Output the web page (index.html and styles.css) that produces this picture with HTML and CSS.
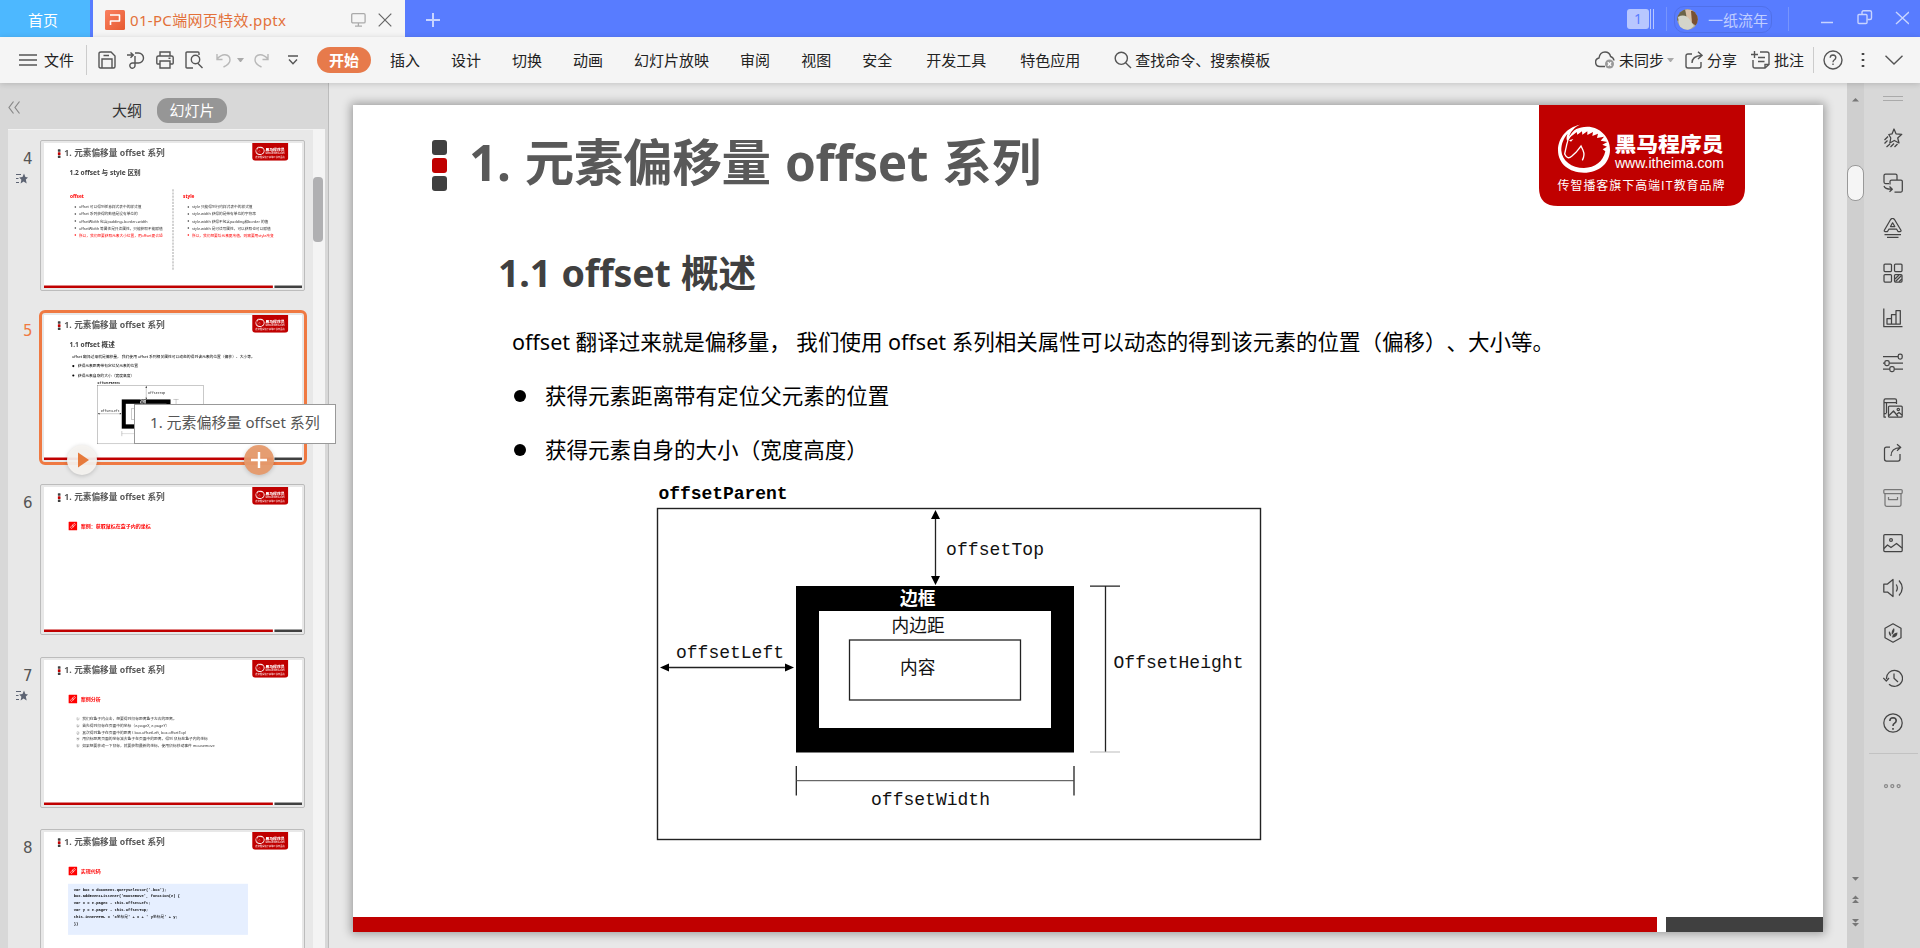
FILE: index.html
```html
<!DOCTYPE html>
<html lang="zh-CN">
<head>
<meta charset="utf-8">
<title>01-PC端网页特效.pptx</title>
<link rel="stylesheet" href="styles.css">
</head>
<body>
<svg class="defs" width="0" height="0" aria-hidden="true">
  <symbol id="logo" viewBox="0 0 206 101">
    <path d="M0 0H206V83Q206 101 187 101H19Q0 101 0 83Z" fill="#c00000"/>
    <g transform="translate(-39 -15) scale(.33333)">
      <path d="M240 104C200 112 174 145 174 180C174 221 207 248 252 248C297 248 330 219 330 179C330 140 298 110 262 110C248 110 238 113 229 117C220 122 211 133 206 143C211 126 222 112 240 104Z" fill="#fff"/>
      <path d="M220 134L230 126L232 134L246 124L247 134L262 124L262 135L279 126L277 138L294 131L291 144L312 140L302 152L322 156L307 164L321 170L308 178L316 184C310 214 285 234 252 234C214 234 186 211 184 182C183 161 192 143 203 131C198 142 200 150 202 153C207 144 213 138 220 134Z" fill="#c00000"/>
      <path d="M212 136C200 150 202 160 197 178L194 192C200 205 207 206 215 199L228 187L243 168L249 181C254 192 252 202 247 211" fill="none" stroke="#fff" stroke-width="4"/>
      <path d="M207 151L220 147L213 155Z" fill="#fff"/>
    </g>
    <text x="75.5" y="46.5" class="logo-name" textLength="109" lengthAdjust="spacingAndGlyphs">黑马程序员</text>
    <text x="76" y="62.5" class="logo-url" textLength="109" lengthAdjust="spacingAndGlyphs">www.itheima.com</text>
    <text x="18.5" y="84.7" class="logo-tag" textLength="167">传智播客旗下高端IT教育品牌</text>
  </symbol>
  <symbol id="diagram" viewBox="650 483 620 360">
    <rect x="657.5" y="508.5" width="603" height="331" fill="none" stroke="#222" stroke-width="1.4"/>
    <text x="658.5" y="498.5" class="dg dg-b" textLength="129">offsetParent</text>
    <path d="M935.5 514V580M664 667.5H790" stroke="#222" stroke-width="1.3"/>
    <path d="M935.5 510L940 519H931ZM935.5 585L940 576H931ZM660 667.5L669 663.5V671.5ZM794 667.5L785 663.5V671.5Z"/>
    <text x="946" y="555" class="dg" textLength="98">offsetTop</text>
    <text x="676" y="657.5" class="dg" textLength="108">offsetLeft</text>
    <rect x="796" y="586" width="278" height="166.5"/>
    <rect x="819" y="611" width="232" height="117" fill="#fff"/>
    <rect x="849.5" y="640" width="171" height="60" fill="none" stroke="#222" stroke-width="1.3"/>
    <text x="900" y="604.5" class="dg-cn dg-inv">边框</text>
    <text x="891.5" y="631.5" class="dg-cn">内边距</text>
    <text x="900" y="673.5" class="dg-cn">内容</text>
    <path d="M1090 586.2H1120M1105.5 586V752M796.3 766V795.5M1074 766V795.5" stroke="#222" stroke-width="1.3"/>
    <path d="M1090 752H1120" stroke="#bbb"/>
    <path d="M796 780.7H1074" stroke="#444"/>
    <text x="1113.5" y="668" class="dg" textLength="130">OffsetHeight</text>
    <text x="871" y="805" class="dg" textLength="119">offsetWidth</text>
  </symbol>
  <symbol id="flag" viewBox="0 0 12 11"><path d="M8 .5L9.4 4L12 4.4L9.8 6.6L10.7 10.5L7.6 8.4L4.6 10.5L5.4 6.7L3.2 4.4L6.5 4ZM0 1H5V2H0ZM0 5H2.5V6H0ZM0 9H3V10H0Z" fill="#5d6473"/></symbol>
  <symbol id="link" viewBox="0 0 51 51"><rect width="51" height="51" rx="5" fill="#f00"/><g fill="none" stroke="#fff" stroke-width="3"><rect x="21" y="15" width="20" height="10" rx="5" transform="rotate(-50 31 20)"/><rect x="11" y="25" width="20" height="10" rx="5" transform="rotate(-50 21 30)"/></g></symbol>
</svg>

<header class="titlebar">
  <div class="home">首页</div>
  <div class="doc">
    <svg class="p-icon" width="20" height="20" viewBox="0 0 20 20"><defs><linearGradient id="pg" x1="0" y1="0" x2="1" y2="1"><stop offset="0" stop-color="#fa8060"/><stop offset="1" stop-color="#e65a30"/></linearGradient></defs><rect width="20" height="20" rx="1.5" fill="url(#pg)"/><path d="M5 5H14.5V11H5.5V15" fill="none" stroke="#fff" stroke-width="1.6" stroke-linejoin="round"/></svg>
    <span class="doc-name">01-PC端网页特效.pptx</span>
    <svg class="i-mon" width="15" height="14" viewBox="0 0 15 14" fill="none" stroke="#aaa" stroke-width="1.3"><rect x=".7" y=".7" width="13.4" height="9.2" rx="1.2"/><path d="M7.4 10V13M4 13.2H11"/></svg>
    <svg class="i-x" width="14" height="14" viewBox="0 0 14 14" stroke="#666" stroke-width="1.2"><path d="M.7 .7L13.3 13.3M13.3 .7L.7 13.3"/></svg>
  </div>
  <svg class="i-plus" width="16" height="16" viewBox="0 0 16 16" stroke="#c8d4ff" stroke-width="2"><path d="M8 1V15M1 8H15"/></svg>
  <div class="title-right">
    <span class="badge">1</span><span class="stripes"></span>
    <span class="tsep"></span>
    <div class="user">
      <svg width="21" height="21" viewBox="0 0 21 21"><clipPath id="av"><circle cx="10.5" cy="10.5" r="10.3"/></clipPath><g clip-path="url(#av)"><rect width="21" height="21" fill="#aaa99b"/><path d="M0 0H13L9 9L0 12Z" fill="#6c6448"/><path d="M8 0H17L15 13L10 10Z" fill="#d8c0a8"/><path d="M14 2L21 0V18L15 14Z" fill="#785034"/><path d="M1 8Q8 4 13 11L17 17L12 21H3Z" fill="#d4d5ca"/></g></svg>
      <span>一纸流年</span>
    </div>
    <span class="tsep tsep2"></span>
    <svg class="i-win" width="88" height="16" viewBox="0 0 88 16" fill="none" stroke="#c8d4ff" stroke-width="1.4"><path d="M0 12.5H12M75 2L88 14M88 2L75 14"/><rect x="37" y="4.5" width="9" height="9" rx="1"/><path d="M41 4V2.2Q41 .8 42.5 .8H49Q50.5 .8 50.5 2.2V8Q50.5 9.5 49 9.5H46.5"/></svg>
  </div>
</header>

<nav class="toolbar">
  <svg class="i-burger" width="18" height="12" viewBox="0 0 18 12" stroke="#555" stroke-width="1.4"><path d="M0 1H18M0 6H18M0 11H18"/></svg>
  <span class="file">文件</span><span class="sep"></span>
  <div class="quick">
    <svg width="18" height="18" viewBox="0 0 18 18"><path d="M3 1H13L17 5V15.5Q17 17 15.5 17H2.5Q1 17 1 15.5V2.5Q1 1 3 1ZM4 17V8H14V17M5.5 4.5H11"/></svg>
    <svg width="18" height="18" viewBox="0 0 18 18"><path d="M0 4H6M3.5 1.5L6.3 4L3.5 6.7M8 2H11.5A5 5 0 0 1 11.5 12H5.5A2.6 2.6 0 1 0 8 14.5V5"/></svg>
    <svg width="18" height="18" viewBox="0 0 18 18"><path d="M4 5V1H14V5M4 13H1.5Q.8 13 .8 12V6.5Q.8 5 2.5 5H15.5Q17.2 5 17.2 6.5V12Q17.2 13 16.5 13H14M4 10H14V17H4ZM12.5 7.3H14.5"/></svg>
    <svg width="18" height="18" viewBox="0 0 18 18"><path d="M8 17H2Q1 17 1 16V2Q1 1 2 1H13Q14 1 14 2V4"/><circle cx="10.5" cy="8.5" r="4.2"/><path d="M12.5 12L17.5 17"/></svg>
    <svg class="dim undo" width="16" height="18" viewBox="0 0 16 18"><path d="M1 3V8.5H6.5M1 8Q5 3.5 9 3.7Q14 4.2 14 9Q14 13 7.5 16"/></svg>
    <i class="caret"></i>
    <svg class="dim" width="16" height="18" viewBox="0 0 16 18"><path d="M15 3V8.5H9.5M15 8Q11 3.5 7 3.7Q2 4.2 2 9Q2 13 8.5 16"/></svg>
    <svg class="more" width="10" height="10" viewBox="0 0 10 10"><path d="M0 1H10M1 4.5L5 8.7L9 4.5"/></svg>
  </div>
  <div class="tabs">
    <span class="active">开始</span><span>插入</span><span>设计</span><span>切换</span><span>动画</span><span>幻灯片放映</span><span>审阅</span><span>视图</span><span>安全</span><span class="wide">开发工具</span><span class="wide">特色应用</span>
  </div>
  <div class="search"><svg width="18" height="18" viewBox="0 0 18 18"><circle cx="7.3" cy="7.3" r="6.1"/><path d="M11.6 11.8L17 17"/></svg>查找命令、搜索模板</div>
  <div class="tools">
    <svg width="20" height="18" viewBox="0 0 20 18"><path d="M10 15.5H5A4.3 4.3 0 0 1 4 7Q5 1 10 1Q14.5 1 15.6 5.5Q18.5 6.5 19 9.5"/><circle cx="14.5" cy="13" r="4.5" fill="#999" stroke="none"/><path d="M12.8 11.3L16.2 14.7M16.2 11.3L12.8 14.7" stroke="#fff"/></svg>
    <span class="t1">未同步</span><i class="caret c2"></i>
    <svg class="g1" width="18" height="18" viewBox="0 0 18 18"><path d="M7 3H3Q1 3 1 5V15Q1 17 3 17H14Q16 17 16 15V11M7 12Q7 5 16.5 4.5M13 .8L17 4.4L13 8"/></svg>
    <span class="t1">分享</span>
    <svg class="g2" width="19" height="18" viewBox="0 0 19 18"><path d="M0 3.5H7M3.5 0V7M9 1H16Q18 1 18 3V13.5L14 17H4Q2 17 2 15V9M14 17V13.5H18M7 10.5H13.5M7 6.5H14"/></svg>
    <span class="t1">批注</span><span class="sep s2"></span>
    <svg class="g3" width="20" height="20" viewBox="0 0 20 20"><circle cx="10" cy="10" r="9"/><path d="M7.2 7.8Q7.4 5 10 5Q12.8 5.2 12.8 7.6Q12.8 9 11.2 10Q10 10.8 10 12.2M10 13.6V15"/></svg>
    <svg class="g4" width="4" height="16" viewBox="0 0 4 16"><path d="M.7 2H3.3M.7 8H3.3M.7 14H3.3" stroke-width="2.2"/></svg>
    <svg class="g5" width="18" height="10" viewBox="0 0 18 10"><path d="M.5 .7L9 9L17.5 .7"/></svg>
  </div>
</nav>

<main class="work">
  <aside class="panel">
    <div class="panel-head">
      <svg width="13" height="13" viewBox="0 0 13 13" fill="none" stroke="#888" stroke-width="1.2"><path d="M5.5 .5L1 6.5L5.5 12.5M11.5 .5L7 6.5L11.5 12.5"/></svg>
      <span class="outline">大纲</span><span class="pill">幻灯片</span>
    </div>
    <div class="panel-body">
      <div class="list">
        <div class="item">
          <div class="gutter">4<svg width="12" height="11"><use href="#flag"/></svg></div>
          <div class="frame"><div class="mini"><section class="slide">
            <div class="head"><div class="dots"><i></i><i></i><i></i></div><h1>1. 元素偏移量 offset 系列</h1><svg class="logo"><use href="#logo"/></svg></div>
            <h2>1.2 offset 与 style 区别</h2>
            <div class="cols">
              <div class="col"><h3>offset</h3><ul><li>offset 可以得到任意样式表中的样式值</li><li>offset 系列获得的数值是没有单位的</li><li>offsetWidth 包含padding+border+width</li><li>offsetWidth 等属性是只读属性，只能获取不能赋值</li><li class="red">所以，我们想要获取元素大小位置，用offset更合适</li></ul></div>
              <div class="col col2"><h3>style</h3><ul><li>style 只能得到行内样式表中的样式值</li><li>style.width 获得的是带有单位的字符串</li><li>style.width 获得不包含padding和border 的值</li><li>style.width 是可读写属性，可以获取也可以赋值</li><li class="red">所以，我们想要给元素更改值，则需要用style改变</li></ul></div>
            </div>
            <div class="foot"><i></i><i></i></div>
          </section></div></div>
        </div>
        <div class="item sel">
          <div class="gutter">5</div>
          <div class="frame"><div class="mini"><section class="slide">
            <div class="head"><div class="dots"><i></i><i></i><i></i></div><h1>1. 元素偏移量 offset 系列</h1><svg class="logo"><use href="#logo"/></svg></div>
            <h2>1.1 offset 概述</h2>
            <p class="para">offset 翻译过来就是偏移量， 我们使用 offset 系列相关属性可以动态的得到该元素的位置（偏移）、大小等。</p>
            <p class="pt">获得元素距离带有定位父元素的位置</p><p class="pt">获得元素自身的大小（宽度高度）</p>
            <svg class="diagram"><use href="#diagram"/></svg>
            <div class="foot"><i></i><i></i></div>
          </section></div>
          <svg class="play" width="36" height="36" viewBox="0 0 36 36"><circle cx="18" cy="18" r="15" fill="#f5f3f0" fill-opacity=".93"/><path d="M14 10.5L25 18L14 25.5Z" fill="#e67a3c"/></svg>
          <svg class="add" width="36" height="36" viewBox="0 0 36 36"><circle cx="18" cy="18" r="15" fill="#e69a6c" fill-opacity=".95"/><path d="M18 10V26M10 18H26" stroke="#fff" stroke-width="2.4"/></svg>
          <div class="tip">1. 元素偏移量 offset 系列</div>
          </div>
        </div>
        <div class="item">
          <div class="gutter">6</div>
          <div class="frame"><div class="mini"><section class="slide">
            <div class="head"><div class="dots"><i></i><i></i><i></i></div><h1>1. 元素偏移量 offset 系列</h1><svg class="logo"><use href="#logo"/></svg></div>
            <div class="case"><svg><use href="#link"/></svg>案例：获取鼠标在盒子内的坐标</div>
            <div class="foot"><i></i><i></i></div>
          </section></div></div>
        </div>
        <div class="item">
          <div class="gutter">7<svg width="12" height="11"><use href="#flag"/></svg></div>
          <div class="frame"><div class="mini"><section class="slide">
            <div class="head"><div class="dots"><i></i><i></i><i></i></div><h1>1. 元素偏移量 offset 系列</h1><svg class="logo"><use href="#logo"/></svg></div>
            <div class="case"><svg><use href="#link"/></svg>案例分析</div>
            <div class="steps"><p><b>①</b>我们在盒子内点击，想要得到鼠标距离盒子左右的距离。</p><p><b>②</b>首先得到鼠标在页面中的坐标（e.pageX, e.pageY）</p><p><b>③</b>其次得到盒子在页面中的距离 ( box.offsetLeft, box.offsetTop)</p><p><b>④</b>用鼠标距离页面的坐标减去盒子在页面中的距离，得到 鼠标在盒子内的坐标</p><p><b>⑤</b>如果想要移动一下鼠标，就要获取最新的坐标，使用鼠标移动事件 mousemove</p></div>
            <div class="foot"><i></i><i></i></div>
          </section></div></div>
        </div>
        <div class="item">
          <div class="gutter">8</div>
          <div class="frame"><div class="mini"><section class="slide">
            <div class="head"><div class="dots"><i></i><i></i><i></i></div><h1>1. 元素偏移量 offset 系列</h1><svg class="logo"><use href="#logo"/></svg></div>
            <div class="case"><svg><use href="#link"/></svg>实现代码</div>
            <pre class="code">var box = document.querySelector('.box');
box.addEventListener('mousemove', function(e) {
var x = e.pageX - this.offsetLeft;
var y = e.pageY - this.offsetTop;
this.innerHTML = 'x<em>坐标是</em>' + x + ' y<em>坐标是</em>' + y;
})</pre>
            <div class="foot"><i></i><i></i></div>
          </section></div></div>
        </div>
      </div>
      <div class="track"><div class="grip"></div></div>
    </div>
  </aside>

  <div class="canvas">
    <section class="slide main-slide">
      <div class="head"><div class="dots"><i></i><i></i><i></i></div><h1>1. 元素偏移量 offset 系列</h1><svg class="logo"><use href="#logo"/></svg></div>
      <h2>1.1 offset 概述</h2>
      <p class="para">offset 翻译过来就是偏移量， 我们使用 offset 系列相关属性可以动态的得到该元素的位置（偏移）、大小等。</p>
      <p class="pt">获得元素距离带有定位父元素的位置</p><p class="pt">获得元素自身的大小（宽度高度）</p>
      <svg class="diagram"><use href="#diagram"/></svg>
      <div class="foot"><i></i><i></i></div>
    </section>
  </div>

  <div class="vscroll">
    <svg class="up" width="9" height="5" viewBox="0 0 9 5"><path d="M1 4.5L4.5 1L8 4.5Z"/></svg>
    <div class="knob"></div>
    <svg class="downs" width="9" height="55" viewBox="0 0 9 55"><path d="M1 1H8L4.5 4.8ZM1 23L4.5 19.5L8 23ZM1 27L4.5 23.5L8 27ZM1 43H8L4.5 46.5ZM1 47H8L4.5 50.5Z"/></svg>
  </div>

  <aside class="side">
    <span class="handle"></span>
    <svg viewBox="0 0 20 20"><path d="M11 1L13 5.8L18.8 6.3L14.7 10L16 15L11.3 12.5L6.8 15L7.8 10L5.8 6.5L9 5.9ZM5 8.5L1.5 12M4.5 12.5L1.5 15.5M7 16L3.5 19M11 15.5L7.5 19M14.5 16L11.5 19"/></svg>
    <svg viewBox="0 0 20 20"><path d="M6 10.5H2.5Q1 10.5 1 9V2.5Q1 1 2.5 1H12.5Q14 1 14 2.5V7M1 13Q2 16.5 9 16.2M6.5 13.5L9.3 16.2L6.5 18.8" /><path d="M7 11.5V8.5Q7 7 8.5 7H18Q19.3 7 19.3 8.3V17.5Q19.3 19 18 19H11.5"/></svg>
    <svg viewBox="0 0 20 20"><path d="M2 13.5Q.8 13.5 1.5 12L7.6 1.5Q9.5-.8 11.5 1.5L17.8 12Q18.5 13.5 17.2 13.5H15L13.5 11H6L4.5 13.5ZM7.5 8.5H11.8L9.6 4.8ZM1.5 16.5H18M4 19.3H15.5"/></svg>
    <svg viewBox="0 0 20 20"><rect x="1" y="1" width="7.5" height="7.5" rx="1"/><rect x="11.5" y="1" width="7.5" height="7.5" rx="1"/><rect x="1" y="11.5" width="7.5" height="7.5" rx="1"/><rect x="11.5" y="11.5" width="7.5" height="7.5" rx="1"/><path d="M12 16L16 12M12.5 18.5L18.5 12.5M16 18.8L18.8 16"/></svg>
    <svg viewBox="0 0 20 20"><path d="M.8 .5V18.7H19.5M4 16V10.5H8.5V16ZM8.5 16V6.5H13V16ZM13 16V2.5H17.3V16Z"/></svg>
    <svg viewBox="0 0 20 20"><path d="M0 3.5H15M0 10H1.5M6.5 10H20M0 16H6.5M11.5 16H20"/><rect x="15.2" y="1" width="4" height="5" rx="1.8"/><rect x="1.8" y="7.5" width="4.4" height="5" rx="1.8"/><rect x="6.8" y="13.5" width="4.4" height="5" rx="1.8"/></svg>
    <svg viewBox="0 0 20 20"><path d="M3 19H1V2.5Q1 .8 2.5 .8H12Q13.5 .8 13.5 2.5V6M1 4.5H13.5M3.5 4.5V15M1 15.5H3.5"/><rect x="5.5" y="8" width="13.7" height="11.2" rx="1"/><path d="M6 17.5L10.5 13L15 18.5M14 16L16 14.5L19 17"/><circle cx="15.3" cy="11.5" r="1.2"/></svg>
    <svg viewBox="0 0 20 20"><path d="M7 4H3.5Q1.5 4 1.5 6V16Q1.5 18 3.5 18H15Q17 18 17 16V11M8 13Q8 5 17.5 4.5M14 1.2L17.8 4.4L14 7.8"/></svg>
    <svg viewBox="0 0 20 20" class="soft"><rect x=".8" y="1.5" width="18.4" height="4" rx="1"/><path d="M2 5.5V16.5Q2 18.3 4 18.3H16Q18 18.3 18 16.5V5.5M5.5 9V11.5H14.5V9"/></svg>
    <svg viewBox="0 0 20 20"><rect x=".8" y="1.5" width="18.4" height="17" rx="1"/><circle cx="8" cy="7" r="1.4"/><path d="M1 15.5L4.5 12L8 14.5L13.5 10.5L19 15"/></svg>
    <svg viewBox="0 0 20 20"><path d="M.8 6H4.5L10 1.5V18.5L4.5 14H.8ZM13.2 6.5Q15.5 10 13.2 13.5M16 2.5Q22.5 10 16 17.5"/></svg>
    <svg viewBox="0 0 20 20"><path d="M10 .8L18 5.3V14.7L10 19.2L2 14.7V5.3Z"/><path d="M8.3 13.6Q5 11.5 6 8Q8.2 9.5 8.3 13.6ZM8.8 12Q8 7.5 11 5Q12.6 8.5 8.8 12ZM9 14.6Q9.5 10 14.5 9.5Q14.5 14.5 9 14.6Z" fill="#444" stroke="none"/></svg>
    <svg viewBox="0 0 20 20"><path d="M3.5 11A8 8 0 1 1 6 16.2M.3 10L3.3 13L6 10M11 5.5V10.3L15 14"/></svg>
    <svg viewBox="0 0 20 20"><circle cx="10" cy="10" r="9.2"/><path d="M6.8 8Q7 4.8 10 4.8Q13.2 5 13.2 7.7Q13.2 9.3 11.4 10.4Q10 11.2 10 13M10 15V16.7" stroke-width="1.6"/></svg>
    <span class="hr"></span>
    <svg class="dots3" viewBox="0 0 20 6"><circle cx="3" cy="3" r="1.5"/><circle cx="9.3" cy="3" r="1.5"/><circle cx="15.6" cy="3" r="1.5"/></svg>
  </aside>
</main>
</body>
</html>
```
FILE: styles.css
```css
* { box-sizing: border-box; }
body {
  margin: 0; width: 1920px; height: 948px; overflow: hidden;
  font: 15px/20px "Noto Sans", "Noto Sans CJK SC", sans-serif; color: #222;
  background: #e8e8e8; display: flex; flex-direction: column;
}
svg { display: block; flex: none; }
i { font-style: normal; }
.defs { display: none; }

/* title bar */
.titlebar { height: 37px; flex: none; background: #587cff; display: flex; align-items: center; white-space: nowrap; }
.home { width: 90px; height: 37px; background: #4db8ff; color: #fff; text-align: center; line-height: 40px; padding-right: 4px; }
.doc { margin-left: 3px; width: 312px; height: 37px; background: #f5f5f5; display: flex; align-items: center; padding-left: 12px; padding-top: 3px; }
.doc-name { margin-left: 5px; width: 157px; color: #e3713a; letter-spacing: .32px; }
.i-mon { margin-left: 64px; }
.i-x { margin-left: 12px; }
.i-plus { margin-left: 20px; margin-top: 2px; }
.title-right { margin-left: auto; display: flex; align-items: center; margin-right: 11px; height: 37px; color: #c0ceff; }
.badge { width: 22px; height: 20px; border-radius: 3px; background: #b8c7ff; color: #587cff; text-align: center; font-size: 14px; }
.stripes { width: 4px; height: 20px; margin-left: 1px; border-left: 1px solid #b8c7ff; border-right: 1px solid #b8c7ff; }
.tsep { width: 1px; height: 24px; margin-left: 12px; background: #7795fc; }
.tsep2 { margin-left: 16px; }
.user { margin-left: 7px; margin-top: 2px; width: 98px; height: 27px; border: 1px solid #5070e8; border-radius: 10px; display: flex; align-items: center; padding-left: 2px; }
.user span { margin-left: 10px; }
.i-win { margin-left: 32px; margin-top: -1px; }

/* ribbon tabs */
.toolbar { height: 46px; flex: none; background: #f5f5f5; display: flex; align-items: center; white-space: nowrap; position: relative; z-index: 2; box-shadow: 0 1px 6px rgba(0,0,0,.16); }
.toolbar svg { fill: none; stroke: #555; stroke-width: 1.4; }
.i-burger { margin-left: 19px; }
.file { margin-left: 7px; }
.sep { width: 1px; height: 30px; margin-left: 12px; background: #ccc; }
.quick { margin-left: 11px; display: flex; align-items: center; gap: 11px; }
.toolbar .dim { stroke: #b8b8b8; }
.quick .undo { margin-left: 2px; }
.quick .caret { margin: 0 -2px 0 -6px; }
.quick .more { margin-left: 8px; }
.caret { border: 3.5px solid transparent; border-top: 4px solid #aaa; border-bottom: 0; width: 7px; height: 4px; }
.tabs { display: flex; align-items: center; gap: 31px; margin-left: 19px; }
.tabs .active { background: #e77a4b; color: #fff; font-weight: 700; border-radius: 13px; height: 26px; line-height: 26px; padding: 0 12px; margin-right: -12px; }
.tabs .wide { margin-left: 3px; }
.search { display: flex; align-items: center; gap: 3px; margin-left: 34px; }
.tools { margin-left: auto; margin-right: 17px; display: flex; align-items: center; }
.t1 { margin-left: 4px; }
.c2 { margin-left: 3px; }
.g1 { margin-left: 11px; }
.g2 { margin-left: 14px; }
.s2 { margin-left: 9px; height: 26px; }
.g3 { margin-left: 9px; }
.g4 { margin-left: 18px; }
.g5 { margin-left: 20px; }
.toolbar .g4 { stroke: #444; }

.work { flex: 1; display: flex; min-height: 0; overflow: hidden; }

/* slide panel */
.panel { width: 329px; background: #d8d8d8; border-right: 1px solid #bcbcbc; display: flex; flex-direction: column; position: relative; z-index: 1; }
.panel-head { height: 46px; flex: none; display: flex; align-items: center; padding: 8px 0 0 8px; }
.panel-head svg { margin-top: -5px; }
.outline { margin-left: 91px; color: #333; }
.pill { margin-left: 15px; width: 70px; height: 25px; line-height: 25px; border-radius: 11px; background: #969696; color: #fff; text-align: center; }
.panel-body { flex: 1; min-height: 0; display: flex; margin: 0 3px 0 8px; }
.list { width: 305px; background: #e8e8e8; border-top: 1px solid #f2f2f2; padding-top: 9.7px; }
.track { width: 12px; background: #f4f4f4; padding-top: 48px; }
.grip { width: 10px; height: 65px; border-radius: 4px; background: #b0b0b2; }
.item { height: 172.33px; display: flex; align-items: flex-start; }
.gutter { width: 32px; flex: none; padding: 9px 0 0 15px; font: 15px/20px "DejaVu Sans", sans-serif; color: #555; }
.gutter svg { margin: 4px 0 0 -7px; }
.frame { width: 265px; height: 151px; border: 1px solid #bcbcbc; border-radius: 2px; padding: 2px 3px; position: relative; }
.sel .frame { width: 268px; height: 155px; border: 3px solid #ef7942; border-radius: 6px; padding: 2px; margin: -2px 0 0 -1px; }
.sel .gutter { color: #ef7942; }
.mini { width: 258px; height: 145px; overflow: hidden; }
.mini .slide { transform: scale(.17551); transform-origin: 0 0; }
.play, .add { position: absolute; top: 129px; left: 22px; filter: drop-shadow(0 1px 2px rgba(0,0,0,.2)); }
.add { left: 199px; }
.tip { position: absolute; left: 92px; top: 91px; width: 202px; height: 40px; background: #fff; border: 1px solid #999; line-height: 35px; text-align: center; white-space: nowrap; color: #555; }

/* slide */
.slide { width: 1470px; height: 827px; background: #fff; display: flex; flex-direction: column; color: #000; font: 21.53px/54px "Noto Sans", "Noto Sans CJK SC", sans-serif; white-space: nowrap; text-spacing-trim: space-all; }
.head { height: 101px; flex: none; display: flex; align-items: flex-start; padding: 0 78px 0 79px; }
.dots { width: 15px; margin-top: 35px; display: flex; flex-direction: column; gap: 3px; }
.dots i { height: 15px; border-radius: 3px; background: #404040; }
.dots i:nth-child(2) { background: #c00000; }
h1 { margin: 32px 0 0 22px; font-size: 49.5px; line-height: 51px; color: #595959; letter-spacing: -.3px; word-spacing: 1.6px; }
.logo { width: 206px; height: 101px; margin-left: auto; }
.logo-name { font: 900 20px "Noto Sans CJK SC", sans-serif; fill: #fff; }
.logo-url { font: 15px "Liberation Sans", sans-serif; fill: #fff; }
.logo-tag { font: 12px "Noto Sans CJK SC", sans-serif; fill: #fff; }
h2 { margin: 42px 0 1px 145px; font-size: 37.6px; line-height: 50px; color: #404040; letter-spacing: -.2px; word-spacing: 1px; }
.slide p { margin: 0; }
.slide .para { margin: 16px 0 0 159px; }
.pt { display: flex; align-items: center; }
.slide .pt { margin-left: 161px; }
.pt::before { content: ""; width: 12px; height: 12px; border-radius: 50%; background: #000; margin-right: 19px; }
.diagram { width: 620px; height: 360px; margin: 6px 0 0 297px; }
.dg { font: 18px "Liberation Mono", monospace; fill: #111; }
.dg-b { font-weight: 700; fill: #000; }
.dg-cn { font: 17.7px "Noto Sans CJK SC", sans-serif; fill: #111; }
.dg-inv { font-weight: 700; fill: #fff; }
.foot { margin-top: auto; display: flex; justify-content: space-between; }
.foot i { height: 15px; width: 1304px; background: #c00000; }
.foot i + i { width: 157px; background: #404040; }
.main-slide { box-shadow: 0 0 9px 2px rgba(0,0,0,.33); }

.cols { display: flex; margin: 70px 0 0 148px; height: 458px; font-size: 21px; line-height: 38px; color: #333; }
.cols h3 { margin: 20px 0; font-size: 27px; line-height: 40px; color: #f00; }
.col { width: 590px; border-right: 6px dashed #aaa; }
.col2 { border: 0; margin-left: 54px; }
.cols ul { margin: 0; padding-left: 51px; }
.cols li::marker { font-size: 26px; }
.cols .red { color: #f00; }
.case { margin: 96px 0 0 139px; display: flex; align-items: center; gap: 19px; font-size: 28.5px; font-weight: 700; line-height: 51px; color: #f00; }
.case svg { width: 51px; height: 51px; }
.steps { margin: 64px 0 0 183px; line-height: 39.3px; color: #333; }
.steps b { display: inline-block; width: 35px; font-weight: 400; }
.code { margin: 47px 0 0 137px; width: 1025px; height: 291px; padding: 14px 32px; background: #e6efff; font: 700 21.5px/39px "Liberation Mono", "Noto Sans CJK SC", monospace; }
.code em { font-style: normal; font-weight: 400; }

/* editing area */
.canvas { flex: 1; padding: 22px 24px 0; background: #e8e8e8; overflow: hidden; }
.vscroll { width: 17px; background: #cfcfcf; display: flex; flex-direction: column; align-items: center; padding-top: 14px; }
.vscroll svg { fill: #777; }
.knob { width: 17px; height: 36px; margin-top: 63px; border: 1px solid #999; border-radius: 8px; background: #f5f5f5; }
.downs { margin-top: 675px; }

/* task pane */
.side { width: 56px; background: #d8d8d8; display: flex; flex-direction: column; align-items: center; padding: 13px 0 0 2px; }
.side svg { width: 20px; height: 20px; margin-bottom: 25px; fill: none; stroke: #444; stroke-width: 1.25; stroke-linejoin: round; }
.side .soft { stroke: #777; }
.handle { width: 20px; height: 5px; flex: none; border-top: 1px solid #aaa; border-bottom: 1px solid #aaa; margin-bottom: 27px; }
.hr { width: 49px; height: 1px; flex: none; background: #c2c2c2; margin: -5px 0 29px; }
.side .dots3 { height: 6px; stroke: #888; margin-bottom: 0; }
```
